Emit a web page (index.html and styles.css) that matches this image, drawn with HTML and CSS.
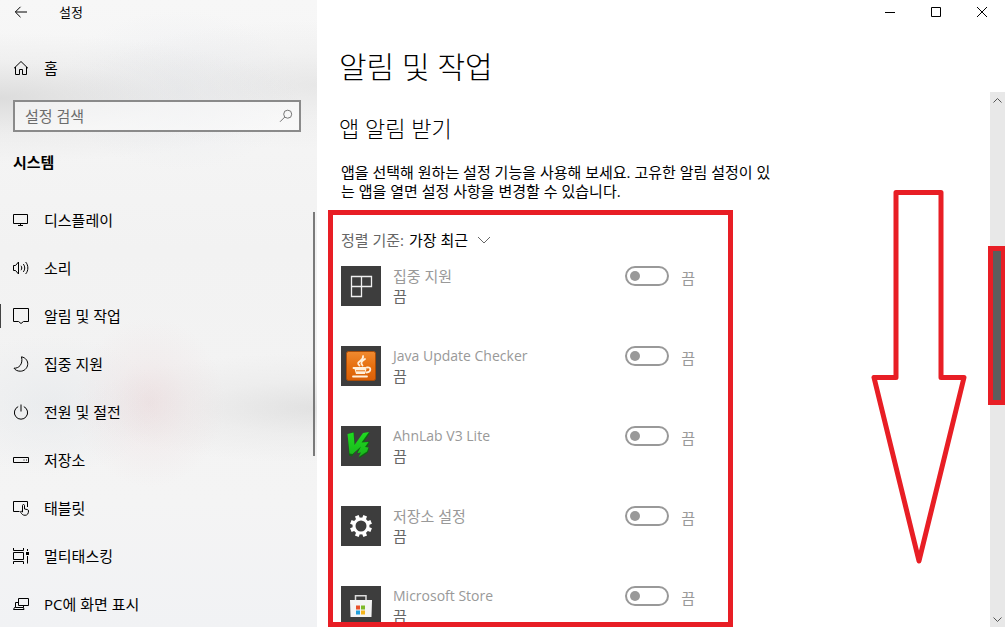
FILE: index.html
```html
<!DOCTYPE html>
<html lang="ko">
<head>
    <meta charset="UTF-8">
    <meta name="viewport" content="width=device-width, initial-scale=1.0">
    <title>설정</title>
    <link rel="stylesheet" href="styles.css">
</head>
<body>
    <aside class="sidebar">
        <div class="app-bar">
            <button class="back" aria-label="뒤로">
                <svg width="14" height="12" viewBox="0 0 14 12"><path d="M13 6H1.5M6.5 .8L1.3 6l5.2 5.2"/></svg>
            </button>
            <span class="app-title">설정</span>
        </div>
        <a class="nav-link home" href="#">
            <svg class="icon" viewBox="0 0 16 16"><path d="M1 8.300L8 1.500l7 6.800M2.500 7v7.500h4v-5h3v5h4V7"/></svg>
            <span>홈</span>
        </a>
        <form class="search">
            <input type="text" placeholder="설정 검색" aria-label="설정 검색">
            <svg width="14" height="14" viewBox="0 0 14 14"><circle cx="8.700" cy="5.200" r="4"/><path d="M5.800 8L1 12.800"/></svg>
        </form>
        <h2 class="group-title">시스템</h2>
        <nav class="nav">
            <a class="nav-link" href="#">
                <svg class="icon" viewBox="0 0 16 16"><path d="M.5 2.500h14v9H.5zM7.500 11.500v2M5 13.500h5"/></svg>
                <span>디스플레이</span>
            </a>
            <a class="nav-link" href="#">
                <svg class="icon" viewBox="0 0 16 16"><path d="M.5 5.500h2l3-3.500v12l-3-3.500h-2zM8 5.800c1 1.200 1 3.200 0 4.400M10.200 4c2 2.200 2 5.800 0 8M12.600 2c3 3.200 3 8.800 0 12"/></svg>
                <span>소리</span>
            </a>
            <a class="nav-link active" href="#">
                <svg class="icon" viewBox="0 0 16 16"><path d="M.5.500h15v13h-5l-2.500 2-2.500-2h-5z"/></svg>
                <span>알림 및 작업</span>
            </a>
            <a class="nav-link" href="#">
                <svg class="icon" viewBox="0 0 16 16"><path d="M8.500.8c4.500 1 6.500 4.300 6.200 7.700-.4 4-3.700 6.800-7.500 6.700-2.700 0-4.900-1.100-6.200-3 4.500.3 9.300-3.600 7.500-11.400z"/></svg>
                <span>집중 지원</span>
            </a>
            <a class="nav-link" href="#">
                <svg class="icon" viewBox="0 0 16 16"><path d="M8 .5v7M5.200 2.600a6.600 6.600 0 1 0 5.600 0"/></svg>
                <span>전원 및 절전</span>
            </a>
            <a class="nav-link" href="#">
                <svg class="icon" viewBox="0 0 16 16"><path d="M.5 5.500h15v5H.5zM10.500 8h1M13 8h1"/></svg>
                <span>저장소</span>
            </a>
            <a class="nav-link" href="#">
                <svg class="icon" viewBox="0 0 16 16"><path d="M6.500 11.500h-6v-10h14v5.500M9.500 12V5.500c0-1.300 2-1.300 2 0V9l3 .6c.8.2 1 .7 1 1.400 0 2.500-1 4.300-3.500 4.300-2.200 0-3.300-1.300-4.300-3-.6-1.100.4-1.500 1.800-.3"/></svg>
                <span>태블릿</span>
            </a>
            <a class="nav-link" href="#">
                <svg class="icon" viewBox="0 0 16 16"><path d="M.5 0v2.500h10V0M.5 4.500h10v7H.5zM.5 16v-2.500h10V16M14.500 1v2M14.500 8v7.500"/><rect x="13" y="4" width="3" height="3" fill="currentColor" stroke="none"/></svg>
                <span>멀티태스킹</span>
            </a>
            <a class="nav-link" href="#">
                <svg class="icon" viewBox="0 0 16 16"><path d="M5.500 9.500v-7h10v7zM5.500 6.500h-3v5M2.500 11.500h8l.500 2H.5l1-2zM10.500 9.500v2"/></svg>
                <span>PC에 화면 표시</span>
            </a>
            <div class="nav-thumb"></div>
        </nav>
    </aside>

    <main class="main">
        <div class="window-controls">
            <button aria-label="최소화"><svg width="12" height="12" viewBox="0 0 12 12"><path d="M1 6.500h10"/></svg></button>
            <button aria-label="최대화"><svg width="12" height="12" viewBox="0 0 12 12"><path d="M1.500 1.500h9v9h-9z"/></svg></button>
            <button aria-label="닫기"><svg width="12" height="12" viewBox="0 0 12 12"><path d="M1 1l10 10M11 1L1 11"/></svg></button>
        </div>
        <h1>알림 및 작업</h1>
        <div class="scroll-area">
            <div class="content">
                <h2>앱 알림 받기</h2>
                <p class="description">앱을 선택해 원하는 설정 기능을 사용해 보세요. 고유한 알림 설정이 있는 앱을 열면 설정 사항을 변경할 수 있습니다.</p>
                <section class="app-box">
                    <div class="sort">
                        <label for="sort">정렬 기준:</label>
                        <select id="sort"><option>가장 최근</option></select>
                        <svg width="14" height="8" viewBox="0 0 14 8"><path d="M1 1l6 6 6-6"/></svg>
                    </div>
                    <ul class="apps">
                        <li class="app">
                            <svg class="tile" viewBox="0 0 40 40"><path d="M10.500 10.500h20v10h-10v10h-10zM20.500 10.500v10M10.500 20.500h10" fill="none" stroke="#f0f0f0" stroke-width="1.300"/></svg>
                            <div class="app-text"><label for="app1">집중 지원</label><span>끔</span></div>
                            <input type="checkbox" role="switch" id="app1">
                            <span class="state">끔</span>
                        </li>
                        <li class="app">
                            <svg class="tile" viewBox="0 0 40 40">
                                <defs><linearGradient id="java" x2="0" y2="1"><stop offset="0" stop-color="#f08a30"/><stop offset=".5" stop-color="#e67010"/><stop offset="1" stop-color="#d85f08"/></linearGradient></defs>
                                <rect x="5.500" y="5.500" width="29" height="29" rx="2" fill="url(#java)" stroke="#a84c08"/>
                                <g fill="none" stroke="#fff0dc" stroke-width="1.800" stroke-linecap="round"><path d="M18.500 19.500c-5-4 5-4.500 3.500-9.500M21.500 19.500c-2.500-3-.5-4.500 2.500-6.500"/><path d="M12.500 22h12M26 21.500c4.500-1 4.500 4.500-.5 5M12 30.500h14"/></g>
                                <path d="M13.500 23h12l-1.500 5h-9z" fill="#fff0dc"/><path d="M15 24.800h9" stroke="#e67010"/>
                            </svg>
                            <div class="app-text"><label for="app2" lang="en">Java Update Checker</label><span>끔</span></div>
                            <input type="checkbox" role="switch" id="app2">
                            <span class="state">끔</span>
                        </li>
                        <li class="app">
                            <svg class="tile" viewBox="0 0 40 40">
                                <defs><linearGradient id="v3" x2="0" y2="1"><stop offset="0" stop-color="#1fdc20"/><stop offset="1" stop-color="#19b51c"/></linearGradient></defs>
                                <path d="M7 8l6-2 1 14L23 8l6-1-6 9 6-.500-3 6 2 1-1 4-9 6 2-6-4 1 1-6-6 9-3-1z" fill="#0d6a10"/>
                                <path d="M6.500 8l6-1.500L13.500 19 22 7l6-1-7.500 10.500 7-.500-3.500 5 3.500.500-1.500 4-8.500 5.500 2.500-4.500-3.500.500 3.500-6.500L11.500 28l-3-.500z" fill="url(#v3)"/>
                            </svg>
                            <div class="app-text"><label for="app3" lang="en">AhnLab V3 Lite</label><span>끔</span></div>
                            <input type="checkbox" role="switch" id="app3">
                            <span class="state">끔</span>
                        </li>
                        <li class="app">
                            <svg class="tile" viewBox="0 0 40 40">
                                <circle cx="20" cy="20" r="7" fill="none" stroke="#fff" stroke-width="3"/>
                                <g stroke="#fff" stroke-width="4"><path d="M20 9v4M20 27v4M9 20h4M27 20h4" transform="rotate(22.500 20 20)"/><path d="M20 9v4M20 27v4M9 20h4M27 20h4" transform="rotate(67.500 20 20)"/></g>
                            </svg>
                            <div class="app-text"><label for="app4">저장소 설정</label><span>끔</span></div>
                            <input type="checkbox" role="switch" id="app4">
                            <span class="state">끔</span>
                        </li>
                        <li class="app">
                            <svg class="tile" viewBox="0 0 40 40">
                                <path d="M14.500 15v-5.200h10.500V15" fill="none" stroke="#ddd" stroke-width="1.500"/>
                                <path d="M9 14h22l-.5 17h-21z" fill="#f4f4f4"/>
                                <path d="M15 19.500h4v4h-4z" fill="#e8502a"/><path d="M20 19.500h4v4h-4z" fill="#7db928"/><path d="M15 24.500h4v4h-4z" fill="#209fdc"/><path d="M20 24.500h4v4h-4z" fill="#f5b51c"/>
                            </svg>
                            <div class="app-text"><label for="app5" lang="en">Microsoft Store</label><span>끔</span></div>
                            <input type="checkbox" role="switch" id="app5">
                            <span class="state">끔</span>
                        </li>
                    </ul>
                </section>
            </div>
            <svg class="arrow" width="96" height="380" viewBox="0 0 96 380"><path d="M25 4.500h45v185h23L48 373 3 189.500h22z"/></svg>
            <div class="scrollbar">
                <svg width="9" height="5" viewBox="0 0 9 5"><path d="M.5 4.500l4-4 4 4"/></svg>
                <div class="thumb"></div>
                <svg width="9" height="5" viewBox="0 0 9 5"><path d="M.5.5l4 4 4-4"/></svg>
            </div>
        </div>
    </main>
</body>
</html>
```
FILE: styles.css
```css
* {
    box-sizing: border-box;
}
body {
    margin: 0;
    display: flex;
    height: 100vh;
    overflow: hidden;
    font-family: "Open Sans", "Noto Sans CJK KR", sans-serif;
    font-size: 15px;
    line-height: 20px;
    color: #000;
    background: #fff;
}
h1, h2, p, ul {
    margin: 0;
    padding: 0;
}
svg {
    flex: none;
    fill: none;
    stroke: currentColor;
}
button {
    display: flex;
    align-items: center;
    justify-content: center;
    padding: 0;
    border: none;
    background: none;
    color: inherit;
}
a {
    color: inherit;
    text-decoration: none;
}

/* sidebar */
.sidebar {
    flex: none;
    display: flex;
    flex-direction: column;
    width: 317px;
    background:
        radial-gradient(ellipse 75px 85px at 150px 402px, rgba(232, 205, 208, 0.4), rgba(236, 215, 217, 0.2) 50%, transparent),
        radial-gradient(ellipse 240px 55px at 317px 408px, rgba(208, 208, 208, 0.5), rgba(220, 220, 220, 0.25) 50%, transparent),
        radial-gradient(ellipse 110px 70px at 50px 405px, rgba(220, 225, 230, 0.4), transparent),
        radial-gradient(ellipse 300px 65px at 0 98px, rgba(200, 200, 200, 0.55), rgba(218, 218, 218, 0.25) 55%, transparent),
        radial-gradient(ellipse 240px 65px at 317px 85px, rgba(210, 210, 210, 0.4), rgba(222, 222, 222, 0.2) 50%, transparent),
        radial-gradient(ellipse 120px 80px at 180px 90px, rgba(226, 229, 235, 0.4), transparent),
        linear-gradient(#f7f7f7, #f2f2f2 40%, #f4f4f4 80%, #f1f2f4);
}
.app-bar {
    display: flex;
    align-items: center;
    height: 24px;
    padding-left: 14px;
}
.app-title {
    margin-left: 31px;
    font-size: 13px;
}
.nav-link {
    flex: none;
    display: flex;
    align-items: center;
    gap: 15px;
    height: 48px;
    padding-left: 13px;
}
.home {
    margin-top: 20px;
}
.icon {
    width: 16px;
    height: 16px;
}
.search {
    display: flex;
    align-items: center;
    height: 32px;
    margin: 8px 16px 0 13px;
    padding: 0 6px 0 10px;
    border: 2px solid #8a8a8a;
    background: rgba(255, 255, 255, 0.5);
    color: #767676;
}
.search input {
    flex: 1;
    min-width: 0;
    padding: 0;
    border: none;
    outline: none;
    background: none;
    font: inherit;
    color: inherit;
}
.search input::placeholder {
    color: #6c6c6c;
}
.group-title {
    margin: 20px 13px 24px;
    font-size: 15px;
    line-height: 20px;
}
.nav {
    position: relative;
    flex: 1;
    overflow: hidden;
}
.active {
    background: linear-gradient(#444, #444) 0 50% / 1px 24px no-repeat;
}
.nav-thumb {
    position: absolute;
    top: 16px;
    right: 2px;
    width: 2px;
    height: 244px;
    background: #7a7a7a;
}

/* main pane */
.main {
    flex: 1;
    display: flex;
    flex-direction: column;
    min-width: 0;
}
.window-controls {
    flex: none;
    display: flex;
    justify-content: flex-end;
    height: 24px;
}
.window-controls button {
    width: 46px;
}
.main h1 {
    margin: 23px 0 5px 22px;
    font-size: 30px;
    font-weight: 300;
    line-height: 40px;
}
.scroll-area {
    position: relative;
    flex: 1;
    display: flex;
    justify-content: space-between;
    min-height: 0;
}
.content {
    display: flex;
    flex-direction: column;
    padding: 22px 0 0 11px;
}
.main h2 {
    margin-left: 11px;
    font-size: 22px;
    font-weight: 300;
    line-height: 28px;
}
.description {
    width: 436px;
    margin: 21px 0 9px 13px;
    line-height: 19px;
}
.app-box {
    flex: 1;
    width: 405px;
    min-height: 0;
    padding: 15px 8px 0;
    border: 5px solid #e81e25;
    overflow: hidden;
}
.sort {
    display: flex;
    align-items: center;
    height: 20px;
    margin-bottom: 16px;
    color: #666;
}
.sort select {
    appearance: none;
    margin: 0 8px 0 5px;
    padding: 0;
    border: none;
    background: none;
    font: inherit;
    color: #000;
}
.apps {
    list-style: none;
}
.app {
    display: flex;
    align-items: flex-start;
    height: 80px;
}
.tile {
    width: 40px;
    height: 40px;
    background: #3d3d3d;
    stroke: none;
}
.app-text {
    flex: 1;
    display: flex;
    flex-direction: column;
    margin-left: 12px;
    color: #666;
}
.app-text label, .state {
    color: #999;
}
.app-text label:lang(en) {
    font-size: 14px;
}
.app input {
    appearance: none;
    width: 44px;
    height: 20px;
    margin: 0;
    padding: 3px;
    border: 2px solid #999;
    border-radius: 10px;
}
.app input::before {
    content: "";
    display: block;
    width: 10px;
    height: 10px;
    border-radius: 50%;
    background: #999;
}
.app input:checked::before {
    margin-left: auto;
}
.state {
    margin: 2px 25px 0 12px;
}

/* scrollbar */
.scrollbar {
    position: relative;
    display: flex;
    flex-direction: column;
    align-items: center;
    justify-content: space-between;
    width: 15px;
    padding: 6px 0 5px;
    background: #e8e8e8;
    color: #555;
}
.thumb {
    position: absolute;
    top: 154px;
    right: 0;
    width: 17px;
    height: 159px;
    border: 5px solid #e81e25;
    border-right-width: 4px;
    background: #5d5d5d;
}
.arrow {
    position: absolute;
    top: 96px;
    right: 38px;
    color: #e81e25;
    stroke-width: 5;
    stroke-linejoin: round;
}
```
